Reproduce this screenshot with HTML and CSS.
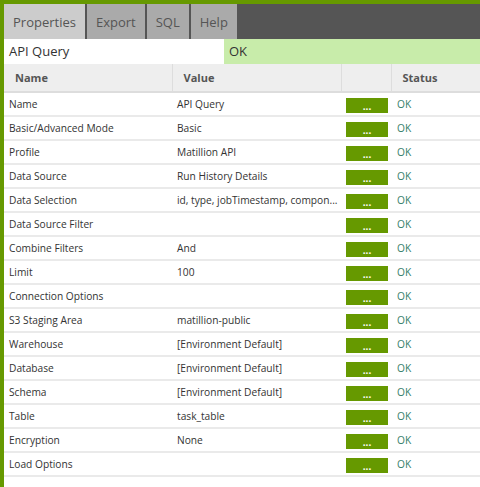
FILE: index.html
```html
<!DOCTYPE html>
<html lang="en">
<head>
    <meta charset="UTF-8">
    <title>API Query properties</title>
    <link rel="stylesheet" href="styles.css">
</head>
<body>
    <div class="panel">
        <div class="tabs">
            <div class="tab active">Properties</div>
            <div class="tab">Export</div>
            <div class="tab">SQL</div>
            <div class="tab">Help</div>
        </div>
        <div class="title-row">
            <div class="title-name">API Query</div>
            <div class="title-status">OK</div>
        </div>
        <table class="props">
            <colgroup>
                <col class="col-name">
                <col class="col-value">
                <col class="col-btn">
                <col class="col-status">
            </colgroup>
            <thead>
                <tr>
                    <th>Name</th>
                    <th>Value</th>
                    <th></th>
                    <th>Status</th>
                </tr>
            </thead>
            <tbody>
                <tr><td>Name</td><td>API Query</td><td><span class="btn">...</span></td><td class="ok">OK</td></tr>
                <tr><td>Basic/Advanced Mode</td><td>Basic</td><td><span class="btn">...</span></td><td class="ok">OK</td></tr>
                <tr><td>Profile</td><td>Matillion API</td><td><span class="btn">...</span></td><td class="ok">OK</td></tr>
                <tr><td>Data Source</td><td>Run History Details</td><td><span class="btn">...</span></td><td class="ok">OK</td></tr>
                <tr><td>Data Selection</td><td>id, type, jobTimestamp, compon...</td><td><span class="btn">...</span></td><td class="ok">OK</td></tr>
                <tr><td>Data Source Filter</td><td></td><td><span class="btn">...</span></td><td class="ok">OK</td></tr>
                <tr><td>Combine Filters</td><td>And</td><td><span class="btn">...</span></td><td class="ok">OK</td></tr>
                <tr><td>Limit</td><td>100</td><td><span class="btn">...</span></td><td class="ok">OK</td></tr>
                <tr><td>Connection Options</td><td></td><td><span class="btn">...</span></td><td class="ok">OK</td></tr>
                <tr><td>S3 Staging Area</td><td>matillion-public</td><td><span class="btn">...</span></td><td class="ok">OK</td></tr>
                <tr><td>Warehouse</td><td>[Environment Default]</td><td><span class="btn">...</span></td><td class="ok">OK</td></tr>
                <tr><td>Database</td><td>[Environment Default]</td><td><span class="btn">...</span></td><td class="ok">OK</td></tr>
                <tr><td>Schema</td><td>[Environment Default]</td><td><span class="btn">...</span></td><td class="ok">OK</td></tr>
                <tr><td>Table</td><td>task_table</td><td><span class="btn">...</span></td><td class="ok">OK</td></tr>
                <tr><td>Encryption</td><td>None</td><td><span class="btn">...</span></td><td class="ok">OK</td></tr>
                <tr><td>Load Options</td><td></td><td><span class="btn">...</span></td><td class="ok">OK</td></tr>
            </tbody>
        </table>
    </div>
</body>
</html>
```

FILE: styles.css
```css
body { margin: 0; font-family: "Open Sans", Arial, sans-serif; background-color: #fff; }

.panel {
    width: 480px;
    height: 487px;
    box-sizing: border-box;
    border-top: 4px solid #669900;
    border-left: 4px solid #669900;
}

/* barra delle schede */
.tabs { display: flex; gap: 2px; height: 35px; background-color: #555; }
.tab {
    display: flex;
    align-items: center;
    padding: 0 9px;
    font-size: 13px;
    color: #555;
    background-color: #aaa;
}
.tab.active { background-color: #ccc; }

/* riga titolo */
.title-row { display: flex; height: 25px; font-size: 13px; color: #333; }
.title-name { width: 220px; padding-left: 5px; box-sizing: border-box; background-color: #fff; line-height: 25px; }
.title-status { flex: 1; padding-left: 5px; background-color: #c8ecaa; line-height: 25px; }

/* tabella proprieta */
.props { width: 476px; border-collapse: collapse; table-layout: fixed; }
.col-name { width: 168px; }
.col-value { width: 169px; }
.col-btn { width: 50px; }
.props th {
    height: 27px;
    padding: 0 0 0 11px;
    text-align: left;
    font-size: 11px;
    font-weight: bold;
    color: #555;
    background-color: #eee;
    border-bottom: 2px solid #ddd;
    border-left: 1px solid #ddd;
}
.props th:first-child { border-left: none; }
.props td {
    height: 22px;
    padding: 0 0 0 5px;
    font-size: 10.2px;
    color: #333;
    border-bottom: 2px solid #eaeaea;
    white-space: nowrap;
    overflow: hidden;
}
.btn {
    display: block;
    width: 42px;
    height: 15px;
    margin-top: 2px;
    background-color: #669900;
    color: #fff;
    font-weight: bold;
    font-size: 10px;
    line-height: 17px;
    text-align: center;
}
.props td.ok { color: #35806a; padding-left: 6px; }
```
